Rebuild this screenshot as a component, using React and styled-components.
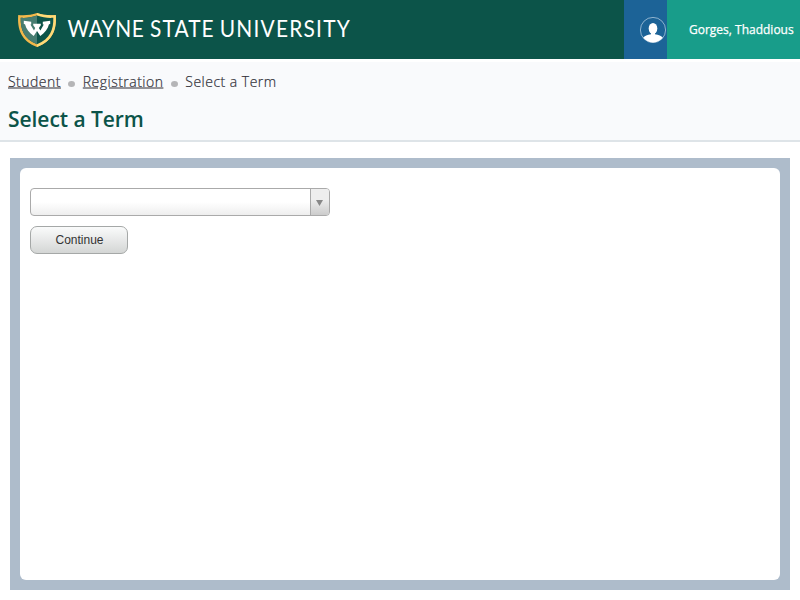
import React from "react";
import styled, { createGlobalStyle } from "styled-components";

const GlobalStyle = createGlobalStyle`
  *, *::before, *::after { box-sizing: border-box; }
  html, body, #root { height: 100%; }
  body { margin: 0; background: #fff; font-family: "Open Sans", sans-serif; overflow: hidden; }
`;

const Page = styled.div`
  height: 600px;
  display: flex;
  flex-direction: column;
`;

const Header = styled.header`
  flex: none;
  height: 59px;
  display: flex;
  background: #0c5449;
`;

const Brand = styled.div`
  flex: 1;
  padding: 12px 0 0 17px;
  svg { display: block; }
`;

const ProfileButton = styled.button`
  width: 43px;
  padding: 1px 0 0 15px;
  border: 0;
  background: #1c6397;
  display: flex;
  align-items: center;
`;

const UserName = styled.div`
  width: 133px;
  padding-left: 22px;
  background: #189d8a;
  color: #fff;
  font-size: 12px;
  font-weight: 400;
  -webkit-text-stroke: 0.25px #fff;
  line-height: 59px;
  white-space: nowrap;
`;

const TitleBar = styled.div`
  flex: none;
  margin-top: 3px;
  height: 80px;
  padding: 10px 8px 0;
  background: #f9fafc;
  border-bottom: 2px solid #dee4e8;
`;

const Breadcrumbs = styled.nav`
  display: flex;
  align-items: center;
  height: 20px;
  font-size: 14px;
  letter-spacing: 0.48px;
  line-height: 20px;
  color: #303038;
`;

const Crumb = styled.a`
  color: inherit;
  font-weight: 300;
  -webkit-text-stroke: 0.2px #303038;
  text-decoration: ${(p) => (p.$link ? "underline" : "none")};
  text-underline-offset: 0;
  text-decoration-thickness: 2px;
  text-decoration-color: #929297;
  text-decoration-skip-ink: auto;
  white-space: nowrap;
`;

const Dot = styled.span`
  width: 7px;
  height: 6px;
  margin: 3px 7.7px 0 7.2px;
  border-radius: 50%;
  background: #b5b5b7;
`;

const Title = styled.h1`
  margin: 11px 0 0;
  font-size: 21px;
  font-weight: 600;
  letter-spacing: -0.05px;
  line-height: 32px;
  color: #0c5449;
`;

const Frame = styled.main`
  flex: 1;
  margin: 16px 10px 10px;
  padding: 10px;
  background: #aebccb;
  display: flex;
`;

const Panel = styled.section`
  flex: 1;
  padding: 20px 10px;
  background: #fff;
  border-radius: 6px;
  display: flex;
  flex-direction: column;
  align-items: flex-start;
  gap: 10px;
`;

const TermSelect = styled.div`
  width: 300px;
  height: 28px;
  display: flex;
  border: 1px solid #aaa;
  border-radius: 4px;
  overflow: hidden;
  background: linear-gradient(to top, #eee 0%, #fff 50%);
`;

const SelectValue = styled.div`
  flex: 1;
`;

const SelectArrow = styled.div`
  width: 19px;
  border-left: 1px solid #aaa;
  background: linear-gradient(to top, #ccc 0%, #eee 60%);
  display: flex;
  align-items: center;
  justify-content: center;
  padding: 2px 2px 0 0;
`;

const ContinueButton = styled.button`
  width: 98px;
  height: 28px;
  padding: 0 0 0 1px;
  border: 1px solid #a5a8a7;
  border-radius: 7px;
  background: linear-gradient(#fafbfb, #d4d6d5);
  color: #333;
  font: 12px "Liberation Sans", sans-serif;
`;

const Wordmark = styled.text`
  fill: #fff;
  font-family: Lato, sans-serif;
  font-size: 22.5px;
`;

const Logo = () => (
  <svg width="350" height="38" viewBox="0 0 350 38" aria-label="Wayne State University">
    <path d="M20 1C14 3 8 3.6 1.2 3C.2 17 4 29 20 35C36 29 39.8 17 38.8 3C32 3.6 26 3 20 1Z" fill="#f2b84b" />
    <path d="M20 1C26 3 32 3.6 38.8 3C39.8 17 36 29 20 35Z" fill="#ffda78" />
    <path d="M20 3.6C14.5 5.5 9 6.2 3.7 5.8C3.4 17.5 6.6 26.8 20 32.2C33.4 26.8 36.6 17.5 36.3 5.8C31 6.2 25.5 5.5 20 3.6Z" fill="#0c5449" />
    <path d="M20 3.6C14.5 5.5 9 6.2 3.7 5.8C3.4 17.5 6.6 26.8 20 32.2Z" fill="#477d71" />
    <path d="M6.8 8.7L14.2 9.7V12.4L13.4 12.6L17 18.4L18.2 16.1L16.2 13.2V11.7H23.8V13.2L21.9 16.1L23.4 18.4L26.8 12.6L25.8 12.4V9.7L33.2 8.7V12L32 12.3C30.8 17 27.7 21 23.3 24L20 18.9L16.7 24C12.3 21 9.2 17 8 12.3L6.8 12Z" fill="#fff" />
    <g transform="scale(.93 1)">
      <Wordmark x="54.3" y="24.6" textLength="82" lengthAdjust="spacing">WAYNE</Wordmark>
      <Wordmark x="143" y="24.6" textLength="68.5" lengthAdjust="spacing">STATE</Wordmark>
      <Wordmark x="218" y="24.6" textLength="139.8" lengthAdjust="spacing">UNIVERSITY</Wordmark>
    </g>
  </svg>
);

const UserIcon = () => (
  <svg width="28" height="28" viewBox="0 0 28 28">
    <circle cx="14" cy="14" r="12.6" fill="none" stroke="#a9c5da" strokeWidth=".8" />
    <ellipse cx="14" cy="12.5" rx="4.3" ry="5.5" fill="#fff" />
    <path d="M12 16H16V18.2C19.6 19 22.5 19.6 23.8 21.8C18.6 28.2 9.4 28.2 4.2 21.8C5.5 19.6 8.4 19 12 18.2Z" fill="#fff" />
  </svg>
);

export default function App() {
  return (
    <>
      <GlobalStyle />
      <Page>
        <Header>
          <Brand><Logo /></Brand>
          <ProfileButton aria-label="Profile"><UserIcon /></ProfileButton>
          <UserName>Gorges, Thaddious</UserName>
        </Header>
        <TitleBar>
          <Breadcrumbs>
            <Crumb $link>Student</Crumb>
            <Dot />
            <Crumb $link>Registration</Crumb>
            <Dot />
            <Crumb>Select a Term</Crumb>
          </Breadcrumbs>
          <Title>Select a Term</Title>
        </TitleBar>
        <Frame>
          <Panel>
            <TermSelect>
              <SelectValue />
              <SelectArrow>
                <svg width="7" height="6" viewBox="0 0 7 6"><path d="M0 0H7L3.5 6Z" fill="#888" /></svg>
              </SelectArrow>
            </TermSelect>
            <ContinueButton>Continue</ContinueButton>
          </Panel>
        </Frame>
      </Page>
    </>
  );
}
